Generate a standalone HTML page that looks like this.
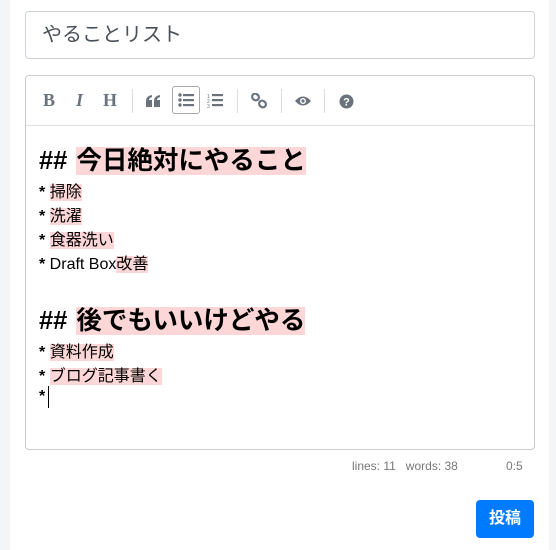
<!DOCTYPE html><html><head><meta charset="utf-8"><style>
body{margin:0;width:556px;height:550px;background:#f4f5f7;position:relative;overflow:hidden;font-family:"Liberation Sans","Noto Sans CJK JP",sans-serif}
.main{position:absolute;left:10px;top:0;width:539px;height:550px;background:#fff}
.title{position:absolute;left:25px;top:11px;border:1px solid #ced4da;border-radius:4px;font-size:20px;color:#495057;line-height:46px;padding-left:16px;box-sizing:border-box;width:510px;height:48px}
.ed{position:absolute;left:25px;top:75px;width:510px;height:375px;border:1px solid #ccc;border-radius:4px;box-sizing:border-box}
.tb{position:absolute;left:0;top:0;right:0;height:49px;border-bottom:1px solid #ddd}
.ic{position:absolute;top:14px;color:#6a737d;font-size:18px;font-family:"Liberation Serif",serif;font-weight:bold}
.sep{position:absolute;top:13px;width:1px;height:24px;background:#ddd}
.l{position:absolute;left:14px;font-size:16px;color:#000;white-space:nowrap}
.l b{font-weight:bold;margin-right:0px}
.h{font-size:25.5px;font-weight:bold}
.m{background:#fdd7d7}
.h .m{margin-left:9px}
.btn{position:absolute;left:476px;top:500px;width:58px;height:38px;background:#007bff;border-radius:4px;color:#fff;font-size:16px;font-weight:bold;text-align:center;line-height:38px}
.st{position:absolute;top:459px;font-size:12px;color:#777}
</style></head><body><div class="main"></div>
<div class="title">やることリスト</div>
<div class="ed"><div class="tb">
<span class="ic" style="left:17px">B</span>
<span class="ic" style="left:50px;font-style:italic">I</span>
<span class="ic" style="left:77px">H</span>
<div class="sep" style="left:106px"></div>
<svg style="position:absolute;left:120px;top:19px" width="15" height="12"><g fill="#6a737d"><path d="M0 6Q0 1 6 0L6 2Q3 3 3 5L6 5L6 12L0 12Z"/><path d="M8 6Q8 1 14 0L14 2Q11 3 11 5L14 5L14 12L8 12Z"/></g></svg>
<div style="position:absolute;left:146px;top:10px;width:28px;height:28px;border:1px solid #aaa;border-radius:3px;box-sizing:border-box"></div>
<svg style="position:absolute;left:152px;top:17px" width="16" height="14"><g fill="#6a737d"><circle cx="2" cy="2" r="1.7"/><circle cx="2" cy="7" r="1.7"/><circle cx="2" cy="12" r="1.7"/><rect x="5" y="1" width="11" height="2.2"/><rect x="5" y="6" width="11" height="2.2"/><rect x="5" y="11" width="11" height="2.2"/></g></svg>
<svg style="position:absolute;left:181px;top:17px" width="17" height="15"><g fill="#6a737d"><text x="0" y="5" font-size="5">1</text><text x="0" y="10" font-size="5">2</text><text x="0" y="15" font-size="5">3</text><rect x="5" y="1" width="11" height="2.2"/><rect x="5" y="6" width="11" height="2.2"/><rect x="5" y="11" width="11" height="2.2"/></g></svg>
<div class="sep" style="left:211px"></div>
<svg style="position:absolute;left:225px;top:17px" width="16" height="16"><g fill="none" stroke="#6a737d" stroke-width="2.2"><rect x="1" y="1" width="7" height="6" rx="3" transform="rotate(40 4.5 4)"/><rect x="8" y="8" width="7" height="6" rx="3" transform="rotate(40 11.5 11)"/></g></svg>
<div class="sep" style="left:255px"></div>
<svg style="position:absolute;left:268px;top:19px" width="18" height="12"><path d="M1 6Q9 -3 17 6Q9 15 1 6Z" fill="#6a737d"/><circle cx="9" cy="6" r="3" fill="#fff"/><circle cx="9" cy="6" r="1.6" fill="#6a737d"/></svg>
<div class="sep" style="left:298px"></div>
<svg style="position:absolute;left:313px;top:18px" width="15" height="15"><circle cx="7.5" cy="7.5" r="7" fill="#6a737d"/><text x="7.5" y="11.5" font-size="11" font-weight="bold" fill="#fff" text-anchor="middle" font-family="Liberation Sans">?</text></svg>
</div></div>
<div class="l h" style="top:140px;left:39px">##<span class="m">今日絶対にやること</span></div>
<div class="l" style="top:178px;left:39px"><b>*</b> <span class="m">掃除</span></div>
<div class="l" style="top:202px;left:39px"><b>*</b> <span class="m">洗濯</span></div>
<div class="l" style="top:226px;left:39px"><b>*</b> <span class="m">食器洗い</span></div>
<div class="l" style="top:250px;left:39px"><b>*</b> Draft Box<span class="m">改善</span></div>
<div class="l h" style="top:300px;left:39px">##<span class="m">後でもいいけどやる</span></div>
<div class="l" style="top:338px;left:39px"><b>*</b> <span class="m">資料作成</span></div>
<div class="l" style="top:362px;left:39px"><b>*</b> <span class="m">ブログ記事書く</span></div>
<div class="l" style="top:386px;left:39px"><b>*</b> <span style="display:inline-block;width:1px;height:22px;background:#000;vertical-align:middle;margin-left:-2px"></span></div>
<div class="st" style="left:352px">lines: 11&nbsp;&nbsp;&nbsp;words: 38</div>
<div class="st" style="left:506px">0:5</div>
<div class="btn">投稿</div>
</body></html>
